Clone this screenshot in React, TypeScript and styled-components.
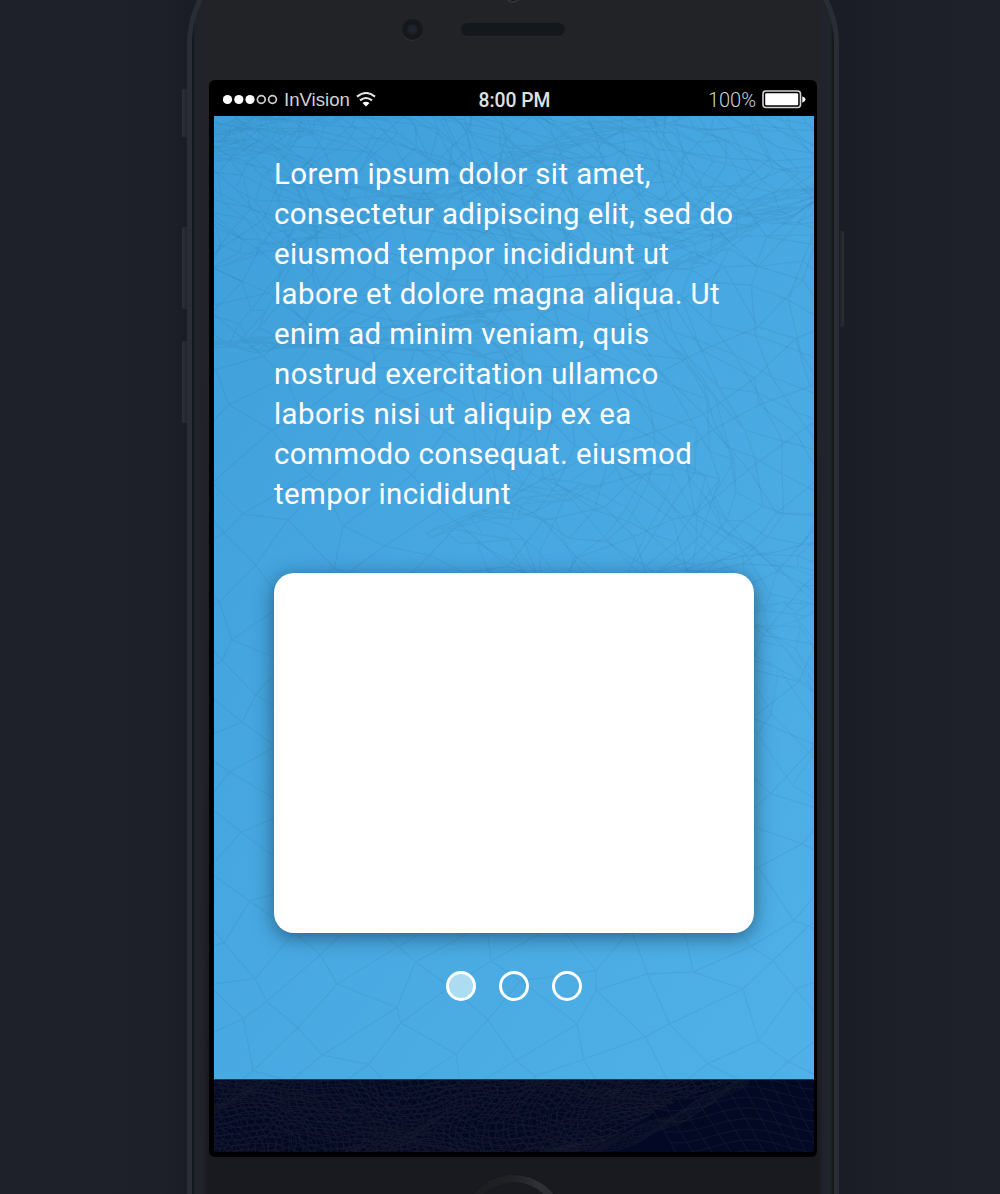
import React from "react";
import styled, { createGlobalStyle } from "styled-components";

const GlobalStyle = createGlobalStyle`
  html, body { margin: 0; padding: 0; background: #1d2029; }
  * { box-sizing: border-box; }
`;

type Point = [number, number];

/* Line mesh: a regular grid pushed through a warp function. */
function mesh(
  cols: number,
  rows: number,
  warp: (u: number, v: number, i: number, j: number) => Point
): string {
  const at = (i: number, j: number) => {
    const [x, y] = warp(i / cols, j / rows, i, j);
    return `${x.toFixed(1)} ${y.toFixed(1)}`;
  };
  let d = "";
  for (let j = 0; j <= rows; j++) {
    for (let i = 0; i <= cols; i++) d += (i ? "L" : "M") + at(i, j);
  }
  for (let i = 0; i <= cols; i++) {
    for (let j = 0; j <= rows; j++) d += (j ? "L" : "M") + at(i, j);
  }
  return d;
}

const noise = (i: number, j: number, seed: number) => {
  const n = Math.sin(i * 127.1 + j * 311.7 + seed * 74.7) * 43758.5453;
  return (n - Math.floor(n)) * 2 - 1;
};

const { sin, cos } = Math;

const wideMesh = mesh(24, 26, (_u, _v, i, j) => {
  const a = (i - j) * 38 + 400;
  const b = (i + j) * 31 - 160;
  return [
    a + 17 * noise(i, j, 1) + 26 * sin(b / 95) - 80,
    b + 13 * noise(i, j, 2) + 22 * sin(a / 80),
  ];
});

const foldedMesh = mesh(27, 20, (u, v, i, j) => {
  const x = u * 700 - 45;
  const y = v * 260 - 50;
  return [
    x + 38 * sin(v * 13 + u * 5) + 20 * sin(u * 21) + 8 * noise(i, j, 3),
    y + 40 * sin(u * 8 + v * 9) + u * 290 * v + 8 * noise(i, j, 4),
  ];
});

const topMesh = mesh(34, 14, (u, v, i, j) => [
  u * 720 - 60 + 28 * sin(v * 15 + u * 9) + 7 * noise(i, j, 5),
  v * 150 - 25 + 25 * sin(u * 12 + v * 7) + 6 * noise(i, j, 6),
]);

const ridgeMesh = mesh(11, 13, (u, v, i, j) => [
  250 + u * 390 + 30 * sin(v * 9) + 12 * noise(i, j, 7),
  300 + v * 220 + u * 145 + 38 * sin(u * 9 + v * 6) + 9 * noise(i, j, 8),
]);

const dockMesh = mesh(95, 21, (u, v, i, j) => [
  u * 640 - 20 + 15 * sin(v * 8 + u * 12) + 1.8 * noise(i, j, 9),
  v * 108 - 18 + 8 * sin(u * 19 + v * 5) + 4 * sin(u * 43) + 1.5 * noise(i, j, 10),
]);

const dockWaves = mesh(80, 24, (u, v, i, j) => [
  u * 650 - 25 + 11 * cos(v * 9 + u * 14) + 1.5 * noise(i, j, 13),
  v * 104 - 16 + 9 * sin(u * 13 - v * 6) + 1.8 * noise(i, j, 11),
]);

const dockPlain = mesh(13, 9, (u, v) => [
  420 + u * 210 + v * 55,
  -8 + v * 96 + 7 * sin(u * 9 + v * 2),
]);

const dockRim = mesh(32, 9, (u, v, i, j) => [
  330 + u * 215 - v * 12 + 1.5 * noise(i, j, 12),
  66 - Math.pow(u, 1.8) * 82 + v * 18 + 2 * sin(u * 23 + v * 4),
]);

const Stage = styled.main`
  display: flex;
  align-items: flex-start;
  width: 1000px;
  height: 1194px;
  padding-left: 182px;
  overflow: hidden;
  background: linear-gradient(90deg, #1e212a 0, #1d2029 160px, #1a1d25 186px, #1a1d25 845px, #1c1f28 880px, #1e212a 100%);
`;

const Rail = styled.div<{ $top: number }>`
  display: flex;
  flex-direction: column;
  width: 5px;
  flex: none;
  padding-top: ${(p) => p.$top}px;
`;

const SideKey = styled.span<{ $h: number; $gap?: number; $right?: boolean }>`
  width: 5px;
  height: ${(p) => p.$h}px;
  margin-top: ${(p) => p.$gap ?? 0}px;
  border-radius: ${(p) => (p.$right ? "0 2px 2px 0" : "2px 0 0 2px")};
  background: ${(p) =>
    p.$right
      ? "linear-gradient(90deg, #16181e, #24272d 40%, #2b2e34)"
      : "linear-gradient(90deg, #2b2e34 30%, #202329)"};
`;

const Phone = styled.section`
  width: 652px;
  height: 1360px;
  flex: none;
  margin-top: -56px;
  padding: 0 17px;
  border: 5px solid #2a2d35;
  border-radius: 100px;
  background:
    linear-gradient(90deg, #15161a 0, #15161a 1px, #20232a 3px, #212329 10px, transparent 16px, transparent 626px, #21242c 632px, #222429 639px, #15161a 641px),
    linear-gradient(180deg, #222327 0, #222327 400px, #191a1f 1200px);
`;

const Forehead = styled.header`
  display: grid;
  grid-template-columns: 193px 59px 104px 1fr;
  align-items: start;
  height: 131px;
  padding-top: 41px;
`;

const Camera = styled.span`
  grid-column: 2;
  justify-self: start;
  margin: 29px 0 0 0;
  width: 21px;
  height: 21px;
  border-radius: 50%;
  background: radial-gradient(circle, #20252e 0, #1c222b 4px, #15171c 6px, #16181c 9px);
  box-shadow: 0 1px 1px #303136;
`;

const Earpiece = styled.div`
  grid-column: 3;
  display: grid;
  justify-items: center;
  row-gap: 20px;
`;

const Sensor = styled.span`
  width: 16px;
  height: 16px;
  margin-top: -3px;
  border-radius: 50%;
  border: 2px solid #303136;
  background: #1a1b1f;
`;

const Speaker = styled.span`
  width: 104px;
  height: 13px;
  border-radius: 7px;
  background: #14171c;
  box-shadow: 0 1px 1px #29292e;
`;

const Glass = styled.div`
  width: 608px;
  height: 1077px;
  padding: 0 3px 5px 5px;
  border-radius: 6px;
  background: #000;
`;

const StatusBar = styled.div`
  display: grid;
  grid-template-columns: 1fr auto 1fr;
  align-items: center;
  height: 36px;
  padding: 3px 8px 0 9px;
  color: #d2d2d2;
  font: 18.6px/24px "Liberation Sans", Arial, sans-serif;
`;

const Carrier = styled.div`
  display: flex;
  align-items: center;
  gap: 6px;
`;

const Clock = styled.time`
  padding-top: 2px;
  color: #e0e0e0;
  font: 500 19.3px/24px Roboto, sans-serif;
`;

const Power = styled.div`
  display: flex;
  align-items: center;
  justify-content: flex-end;
  gap: 6px;
  font: 300 20px/24px Roboto, sans-serif;
`;

const Display = styled.div`
  width: 600px;
  height: 1036px;
`;

const Slide = styled.article`
  display: grid;
  width: 600px;
  height: 963px;
  background: linear-gradient(125deg, #3f9fda 0%, #48a8e1 48%, #4fb1e8 100%);
`;

const Texture = styled.svg`
  grid-area: 1 / 1;
  display: block;
  fill: none;
  stroke: #2d6f96;
  stroke-width: 1.2;
`;

const SlideBody = styled.div`
  grid-area: 1 / 1;
  z-index: 1;
  display: flex;
  flex-direction: column;
  align-items: center;
  padding: 38px 60px 0;
`;

const Copy = styled.p`
  width: 480px;
  margin: 0;
  color: #fff;
  font: 400 29.4px/40px Roboto, sans-serif;
  letter-spacing: 0.43px;
  white-space: pre;
`;

const Card = styled.div`
  width: 480px;
  height: 360px;
  margin-top: 58.6px;
  border-radius: 20px;
  background: #fff;
  box-shadow: 0 4px 20px rgba(17, 47, 73, 0.6);
`;

const Pager = styled.nav`
  display: flex;
  gap: 23.4px;
  margin-top: 38px;
`;

const Dot = styled.span<{ $on?: boolean }>`
  width: 30px;
  height: 30px;
  border: 3px solid #fff;
  border-radius: 50%;
  background: ${(p) => (p.$on ? "#abdcf2" : "transparent")};
`;

const Dock = styled.footer`
  height: 73px;
  border-top: 1px solid #163b5b;
  background: #030824;
  overflow: hidden;
`;

const DockTexture = styled(Texture)`
  stroke: #181d2f;
`;

const Chin = styled.div`
  display: flex;
  justify-content: center;
  padding-top: 18px;
`;

const HomeKey = styled.span`
  width: 103px;
  height: 103px;
  border: 7px solid transparent;
  border-radius: 50%;
  background:
    linear-gradient(#191a1f, #191a1f) padding-box,
    linear-gradient(90deg, #1c1e22 18%, #202226 50%, #2e3136 75%, #25282c) border-box;
  box-shadow: 0 0 1px #101115;
`;

const Signal = () => (
  <svg width="55" height="12" viewBox="0 0 55 12">
    {[4.5, 15.8, 27].map((x) => (
      <circle key={x} cx={x} cy="5.5" r="4.6" fill="#fff" />
    ))}
    {[38.3, 49.5].map((x) => (
      <circle key={x} cx={x} cy="5.5" r="3.9" fill="none" stroke="#d0d0d0" strokeWidth="1.7" />
    ))}
  </svg>
);

const Wifi = () => (
  <svg width="20" height="16" viewBox="0 0 20 16" fill="none" stroke="#e6e6e6" strokeWidth="2.1">
    <path d="M1 4.6 Q10-2.6 19 4.6" />
    <path d="M4 8.4 Q10 3.6 16 8.4" />
    <path d="M10 14.5 L6.5 11 Q10 8.3 13.5 11 Z" fill="#fff" stroke="none" />
  </svg>
);

const Battery = () => (
  <svg width="44" height="19" viewBox="0 0 44 19">
    <rect x="1" y="1" width="37.5" height="16.5" rx="3" fill="none" stroke="#d4d4d4" strokeWidth="1.6" />
    <rect x="3.2" y="3.2" width="33" height="12" rx="1" fill="#fff" />
    <path d="M40.3 6.3 Q43.5 7.6 43.5 9.5 Q43.5 11.4 40.3 12.7 Z" fill="#fff" />
  </svg>
);

const TEXT = [
  "Lorem ipsum dolor sit amet,",
  "consectetur adipiscing elit, sed do",
  "eiusmod tempor incididunt ut",
  "labore et dolore magna aliqua. Ut",
  "enim ad minim veniam, quis",
  "nostrud exercitation ullamco",
  "laboris nisi ut aliquip ex ea",
  "commodo consequat. eiusmod",
  "tempor incididunt",
].join("\n");

export default function App() {
  return (
    <>
      <GlobalStyle />
      <Stage>
        <Rail $top={89}>
          <SideKey $h={48} />
          <SideKey $h={82} $gap={90} />
          <SideKey $h={82} $gap={32} />
        </Rail>
        <Phone>
          <Forehead>
            <Camera />
            <Earpiece>
              <Sensor />
              <Speaker />
            </Earpiece>
          </Forehead>
          <Glass>
            <StatusBar>
              <Carrier>
                <Signal />
                <span>InVision</span>
                <Wifi />
              </Carrier>
              <Clock>8:00 PM</Clock>
              <Power>
                <span>100%</span>
                <Battery />
              </Power>
            </StatusBar>
            <Display>
              <Slide>
                <Texture width="600" height="963" viewBox="0 0 600 963">
                  <path d={wideMesh} opacity="0.13" />
                  <path d={foldedMesh} opacity="0.13" />
                  <path d={topMesh} opacity="0.13" />
                  <path d={ridgeMesh} opacity="0.1" />
                </Texture>
                <SlideBody>
                  <Copy>{TEXT}</Copy>
                  <Card />
                  <Pager>
                    <Dot $on />
                    <Dot />
                    <Dot />
                  </Pager>
                </SlideBody>
              </Slide>
              <Dock>
                <DockTexture width="600" height="72" viewBox="0 0 600 72">
                  <defs>
                    <clipPath id="slope">
                      <path d="M0 0 H535 Q470 12 420 45 T345 72 H0 Z" />
                    </clipPath>
                    <clipPath id="plain">
                      <path d="M535 0 H600 V72 H345 Q400 66 420 45 Q470 12 535 0 Z" />
                    </clipPath>
                  </defs>
                  <g clipPath="url(#slope)">
                    <path d={dockMesh} opacity="0.65" />
                    <path d={dockWaves} opacity="0.55" />
                  </g>
                  <path d={dockPlain} clipPath="url(#plain)" opacity="0.6" />
                  <path d={dockRim} opacity="0.5" />
                </DockTexture>
              </Dock>
            </Display>
          </Glass>
          <Chin>
            <HomeKey />
          </Chin>
        </Phone>
        <Rail $top={231}>
          <SideKey $h={96} $right />
        </Rail>
      </Stage>
    </>
  );
}
